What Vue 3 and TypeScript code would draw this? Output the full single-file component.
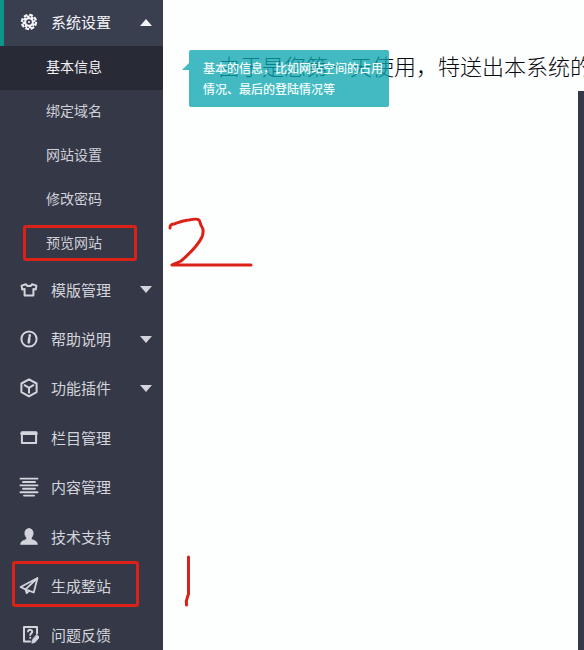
<script setup lang="ts">
import { ref } from 'vue'

interface MenuEntry {
  label: string
  icon: string
  expandable: boolean
}

const open = ref(true)
const current = ref('基本信息')

const settings: string[] = ['基本信息', '绑定域名', '网站设置', '修改密码', '预览网站']

const entries: MenuEntry[] = [
  { label: '模版管理', icon: 'shirt', expandable: true },
  { label: '帮助说明', icon: 'info', expandable: true },
  { label: '功能插件', icon: 'cube', expandable: true },
  { label: '栏目管理', icon: 'window', expandable: false },
  { label: '内容管理', icon: 'lines', expandable: false },
  { label: '技术支持', icon: 'user', expandable: false },
  { label: '生成整站', icon: 'plane', expandable: false },
  { label: '问题反馈', icon: 'feedback', expandable: false },
]
</script>

<template>
  <div class="page">
    <nav class="sidebar">
      <button class="row top" type="button" :aria-expanded="open" @click="open = !open">
        <svg class="icon" viewBox="0 0 20 20" aria-hidden="true">
          <circle cx="10" cy="10" r="4.6" fill="none" stroke="currentColor" stroke-width="3.6" />
          <circle cx="10" cy="10" r="6.8" fill="none" stroke="currentColor" stroke-width="2.8" stroke-dasharray="3.6 1.74" />
          <circle cx="10" cy="10" r="5.4" fill="none" stroke="#3a3f50" stroke-width="1.1" stroke-dasharray="1.6 2.64" />
          <circle cx="10" cy="10" r="1" fill="currentColor" />
        </svg>
        <span class="label">系统设置</span>
        <svg class="caret" viewBox="0 0 12 7" aria-hidden="true"><path d="M0 7 6 0l6 7z" fill="currentColor" /></svg>
      </button>
      <div v-if="open" class="sub">
        <a
          v-for="item in settings"
          :key="item"
          href="#"
          :class="{ active: item === current }"
          @click.prevent="current = item"
        >{{ item }}</a>
      </div>
      <div class="entries">
        <button v-for="entry in entries" :key="entry.label" class="row" type="button">
          <svg class="icon" viewBox="0 0 20 20" fill="none" stroke="currentColor" stroke-width="2" stroke-linejoin="round" stroke-linecap="round" aria-hidden="true">
            <path v-if="entry.icon === 'shirt'" d="M7 4.200 2.600 5.600l.6 3.800 2.400-.4v6.400h8.800V9l2.400.4.6-3.800L13 4.200c-.6 2.400-5.400 2.400-6 0z" />
            <g v-else-if="entry.icon === 'info'">
              <circle cx="10" cy="10" r="7.600" />
              <path d="M10.700 6.300v.6M10.300 9 9.800 13.400" stroke-width="2.600" />
            </g>
            <path v-else-if="entry.icon === 'cube'" d="m10 1.300 7.600 4.200v8.600L10 18.400l-7.600-4.300V5.500zM5.600 7.200 10 9.800l4.400-2.600M10 9.800v5" />
            <g v-else-if="entry.icon === 'window'">
              <rect x="2.900" y="4.300" width="14.200" height="10.700" />
              <path d="M3 5.400h14" stroke-width="3.400" />
            </g>
            <path v-else-if="entry.icon === 'lines'" d="M1.500 1.600h17M4 5h12M1.500 8.400h17M4 11.800h12M1.500 15.200h17M5 18.600h10" stroke-width="1.900" />
            <path v-else-if="entry.icon === 'user'" d="M10 1.600c2.700 0 4.200 1.900 4.200 4.500 0 2-.8 3.600-1.700 4.600v1.500c1 1 5.900 1 5.900 5.300H1.600c0-4.300 4.900-4.300 5.900-5.300v-1.500c-.9-1-1.700-2.600-1.700-4.600 0-2.600 1.500-4.500 4.200-4.500z" fill="currentColor" stroke-width="0.600" />
            <path v-else-if="entry.icon === 'plane'" d="M18.500 2 1.600 11l4.900 2.400 8.200 3.100zM18.500 2 6.500 13.400l1.200 3.800 2.600-2.500" stroke-width="1.800" />
            <g v-else transform="translate(1 0)">
              <path d="M17 8.500V2H4v14.500h6" />
              <path d="M8 6.400c.4-2.200 4.400-2 4.200.4-.1 1.500-1.900 1.500-1.900 3.200M10.200 12.700v.1" />
              <path d="m16.800 9.800 2.600 2.400-4.400 5.200-3.200.8.500-3.200z" fill="currentColor" stroke-width="0.800" />
            </g>
          </svg>
          <span class="label">{{ entry.label }}</span>
          <svg v-if="entry.expandable" class="caret" viewBox="0 0 12 7" aria-hidden="true"><path d="M0 0h12L6 7z" fill="currentColor" /></svg>
        </button>
      </div>
    </nav>

    <main class="main">
      <p class="notice">由于是您第一天使用，特送出本系统的</p>
      <div class="canvas"></div>
      <div class="tip" role="tooltip">基本的信息，比如网站空间的占用<br />情况、最后的登陆情况等</div>
    </main>

    <svg class="marks" width="260" height="620" viewBox="0 0 260 620" fill="none" stroke="#dc2118" stroke-width="3" stroke-linecap="round" stroke-linejoin="round" aria-hidden="true">
      <rect x="24.500" y="226.500" width="111" height="33" rx="1.500" />
      <rect x="13.500" y="562.500" width="124" height="43" rx="1.500" />
      <path d="M170 228c0-3 1-4 4-4 6-2 10-4 15-4 5-1 9-1 10 0 2 3 1 5 3 7 2 3 1 7 0 10-4 8-14 18-21 24-4 2-7 3-9 4h79" />
      <path d="M188.500 557v37c-1 4-3 5-2 11" />
    </svg>
  </div>
</template>

<style>
body {
  margin: 0;
}
</style>

<style scoped>
.page {
  position: relative;
  display: flex;
  height: 100vh;
  overflow: hidden;
  background: #fdfefe;
  font-family: "Noto Sans CJK SC", "Noto Sans", sans-serif;
}

.sidebar {
  flex: 0 0 163px;
  background: #353947;
  color: #d3d4dc;
}

.row {
  display: flex;
  align-items: center;
  width: 100%;
  padding: 0 11px 2px 19px;
  border: 0;
  background: none;
  color: inherit;
  font: inherit;
  font-size: 15px;
  line-height: 24px;
  text-align: left;
}

.row.top {
  height: 46px;
  padding-left: 15px;
  border-left: 4px solid #0d9689;
  background: #3a3f50;
  color: #f4f4f8;
}

.icon {
  width: 20px;
  height: 20px;
}

.label {
  flex: 1;
  margin-left: 12px;
}

.caret {
  width: 12px;
  height: 7px;
}

.sub a {
  display: block;
  padding: 0 0 4px 46px;
  color: #cfd0d9;
  font-size: 14px;
  line-height: 40px;
  text-decoration: none;
}

.sub a.active {
  background: #282a36;
  color: #f2f2f6;
}

.entries {
  display: grid;
  grid-auto-rows: 1fr;
  min-height: 395px;
}

.main {
  position: relative;
  display: flex;
  flex: 1;
  flex-direction: column;
  min-width: 0;
}

.notice {
  margin: 0;
  padding: 41px 0 2px 55px;
  overflow: hidden;
  color: #08090c;
  font-size: 22px;
  font-weight: 300;
  line-height: 48px;
  white-space: nowrap;
}

.canvas {
  flex: 1;
  border-right: 6px solid #353947;
}

.tip {
  position: absolute;
  top: 50px;
  left: 26px;
  box-sizing: border-box;
  width: 200px;
  padding: 7px 0 8px 14px;
  border-radius: 2px;
  background: rgba(11, 165, 174, 0.77);
  color: #effbfb;
  font-size: 12px;
  font-weight: 500;
  line-height: 21px;
  white-space: nowrap;
}

.tip::before {
  position: absolute;
  top: 13px;
  left: -7px;
  border: solid transparent;
  border-width: 7px 7px 0 0;
  border-right-color: rgba(11, 165, 174, 0.77);
  content: "";
}

.marks {
  position: absolute;
  top: 0;
  left: 0;
  pointer-events: none;
}
</style>
